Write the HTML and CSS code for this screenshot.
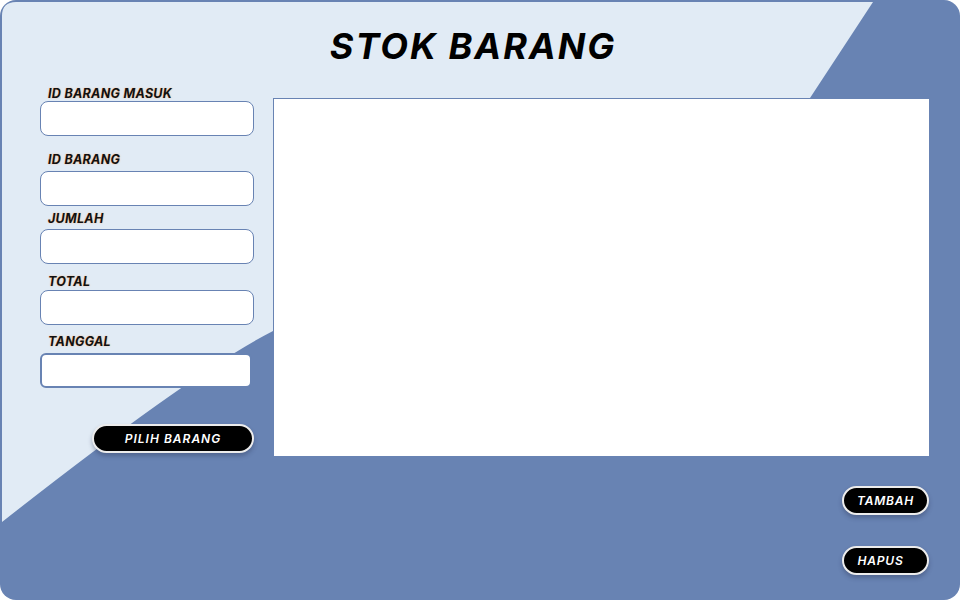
FILE: index.html
```html
<!DOCTYPE html>
<html lang="id">
<head>
<meta charset="utf-8">
<title>Stok Barang</title>
<link rel="stylesheet" href="styles.css">
</head>
<body>
<div class="panel">
  <svg class="backdrop" width="956" height="596" viewBox="0 0 956 596" aria-hidden="true">
    <path d="M14 0 H871 L808 96 L700 250 L271 329 Q189.5 370.8 0 520 V14 Q0 0 14 0 Z" fill="#e1ebf5"/>
  </svg>
  <h1 class="title">STOK BARANG</h1>
  <div class="body">
    <form class="form">
      <div class="field f1"><label>ID BARANG MASUK</label><input type="text"></div>
      <div class="field f2"><label>ID BARANG</label><input type="text"></div>
      <div class="field f3"><label>JUMLAH</label><input type="text"></div>
      <div class="field f4"><label>TOTAL</label><input type="text"></div>
      <div class="field f5"><label>TANGGAL</label><input type="text" class="input-strong"></div>
      <button type="button" class="btn btn-pilih">PILIH BARANG</button>
    </form>
    <div class="table"></div>
  </div>
  <div class="actions">
    <button type="button" class="btn btn-small">TAMBAH</button>
    <button type="button" class="btn btn-small btn-hapus">HAPUS</button>
  </div>
</div>
</body>
</html>
```
FILE: styles.css
```css
* { box-sizing: border-box; }
html, body { margin: 0; padding: 0; background: #ffffff; }
body { width: 960px; height: 600px; font-family: Inter, "Noto Sans", sans-serif; }

.panel {
  position: relative;
  width: 960px;
  height: 600px;
  background: #6883b3;
  border-radius: 16px;
  overflow: hidden;
  padding-top: 28px;
}
.backdrop {
  position: absolute;
  left: 2px;
  top: 2px;
  z-index: 0;
}
.title, .body, .actions { position: relative; z-index: 1; }

.title {
  margin: 0;
  font-size: 36px;
  line-height: 36px;
  font-weight: 700;
  font-style: italic;
  letter-spacing: 2px;
  color: #000;
  text-align: center;
  padding-right: 14px;
}

.body {
  display: flex;
  gap: 19px;
  margin-top: 24px;
  padding-left: 40px;
}
.form {
  width: 214px;
  display: flex;
  flex-direction: column;
  margin: 0;
}
.field { display: flex; flex-direction: column; }
.field label {
  font-size: 12.5px;
  line-height: 12px;
  font-weight: 700;
  font-style: italic;
  letter-spacing: 0.3px;
  color: #111;
  padding-left: 8px;
  text-shadow: 0 0 2px #f3c9a8, 0 0 1px #f3c9a8;
}
.field input {
  width: 214px;
  height: 35px;
  border: 1px solid #6883b3;
  border-radius: 8px;
  background: #fff;
  outline: none;
  padding: 0 10px;
}
.f1 input { margin-top: 1px; }
.f2 { margin-top: 18px; }
.f2 input { margin-top: 5px; }
.f3 { margin-top: 7px; }
.f3 input { margin-top: 4px; }
.f4 { margin-top: 12px; }
.f4 input { margin-top: 2px; }
.f5 { margin-top: 11px; }
.f5 input { margin-top: 5px; }
.field .input-strong {
  width: 212px;
  border: 2px solid #6883b3;
  border-radius: 6px;
}

.btn {
  background: #000;
  color: #fff;
  border: 2px solid #ececec;
  border-radius: 15px;
  height: 29px;
  font-family: Inter, "Noto Sans", sans-serif;
  font-size: 12px;
  font-weight: 600;
  font-style: italic;
  letter-spacing: 1px;
  box-shadow: 0 3px 4px rgba(40, 50, 80, 0.35);
  padding: 0;
  cursor: pointer;
}
.btn-pilih {
  align-self: flex-end;
  width: 162px;
  margin-top: 36px;
}

.table {
  width: 656px;
  height: 358px;
  margin-top: 10px;
  background: #fff;
  border-top: 1px solid #6883b3;
  border-left: 1px solid #6883b3;
}

.actions {
  display: flex;
  flex-direction: column;
  align-items: flex-end;
  gap: 31px;
  margin-top: 30px;
  padding-right: 31px;
}
.btn-small { width: 87px; letter-spacing: 0.8px; }
.btn-hapus { padding-right: 10px; }
```
